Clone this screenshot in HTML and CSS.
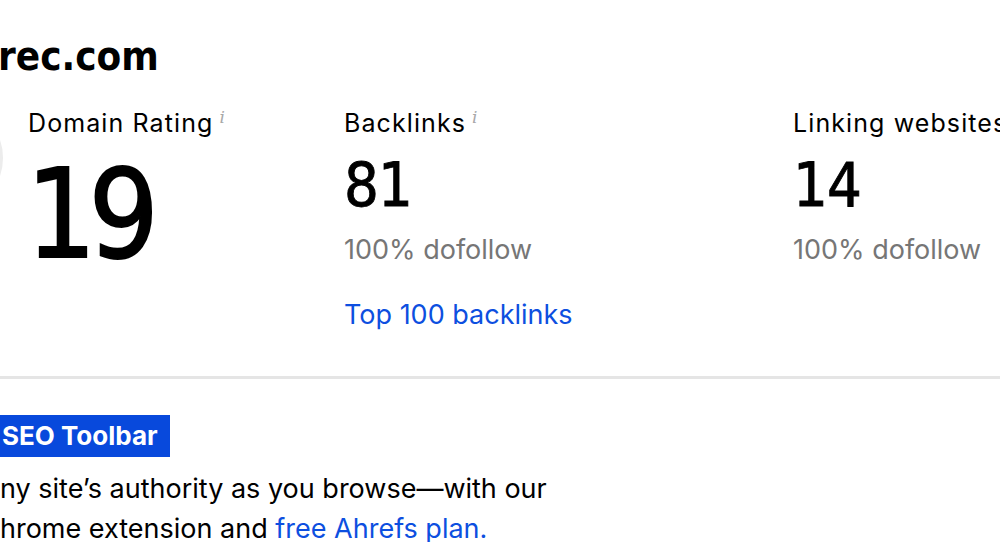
FILE: index.html
```html
<!DOCTYPE html>
<html>
<head>
<meta charset="utf-8">
<link rel="stylesheet" href="styles.css">
</head>
<body>
<main class="page">
  <h1 class="domain">rec.com</h1>
  <section class="stats">
    <div class="gauge"></div>
    <div class="stat stat-dr">
      <div class="label">Domain Rating<span class="info">i</span></div>
      <div class="big">19</div>
    </div>
    <div class="stat stat-bl">
      <div class="label">Backlinks<span class="info">i</span></div>
      <div class="num">81</div>
      <div class="sub">100% dofollow</div>
      <a class="link" href="#">Top 100 backlinks</a>
    </div>
    <div class="stat stat-lw">
      <div class="label">Linking websites</div>
      <div class="num">14</div>
      <div class="sub">100% dofollow</div>
    </div>
  </section>
  <hr class="divider">
  <section class="promo">
    <div class="badge">SEO Toolbar</div>
    <p class="text">ny site’s authority as you browse—with our<br>hrome extension and <a class="link" href="#">free Ahrefs plan.</a></p>
  </section>
</main>
</body>
</html>
```
FILE: styles.css
```css
html, body {
  margin: 0;
  padding: 0;
  background: #fff;
  overflow: hidden;
}
.page {
  width: 1000px;
  height: 542px;
  overflow: hidden;
  font-family: "Inter", "Liberation Sans", sans-serif;
  color: #000;
}
.domain {
  margin: 0;
  padding-top: 32px;
  margin-left: -2px;
  font-family: "DejaVu Sans Condensed", "DejaVu Sans", sans-serif;
  font-stretch: condensed;
  font-weight: 700;
  font-size: 40px;
  line-height: 48px;
  white-space: nowrap;
}
.stats {
  display: flex;
  align-items: flex-start;
  margin-top: 28px;
  white-space: nowrap;
}
.gauge {
  flex: none;
  width: 102px;
  height: 102px;
  border: 3px solid #ececec;
  border-radius: 50%;
  margin-top: -4px;
  margin-left: -105px;
  margin-right: 25px;
}
.stat { flex: none; }
.stat-dr { width: 316px; }
.stat-bl { width: 449px; }
.label {
  font-size: 25px;
  line-height: 30px;
  letter-spacing: 1.1px;
}
.info {
  font-family: "DejaVu Serif", serif;
  font-style: italic;
  font-size: 17px;
  line-height: 0;
  color: #a8a8a8;
  vertical-align: 9px;
  margin-left: 6px;
}
.big {
  font-family: "DejaVu Sans Condensed", "DejaVu Sans", sans-serif;
  font-stretch: condensed;
  font-size: 123px;
  line-height: 123px;
  margin-top: 15px;
  letter-spacing: -8px;
  margin-left: -2px;
  -webkit-text-stroke: 1.8px #000;
}
.num {
  font-family: "DejaVu Sans Condensed", "DejaVu Sans", sans-serif;
  font-stretch: condensed;
  font-size: 61px;
  line-height: 61px;
  margin-top: 16px;
  letter-spacing: -1px;
  -webkit-text-stroke: 0.8px #000;
}
.sub {
  font-size: 27px;
  line-height: 36px;
  color: #767676;
  margin-top: 17px;
}
.link {
  color: #0d4fe0;
  text-decoration: none;
}
.stat-bl .link {
  display: block;
  font-size: 27px;
  line-height: 36px;
  margin-top: 29px;
}
.divider {
  margin: 43px 0 0 0;
  border: 0;
  height: 3px;
  background: #e5e5e5;
}
.promo {
  padding-top: 36px;
}
.badge {
  display: inline-block;
  background: #0849dc;
  color: #fff;
  font-weight: 700;
  font-size: 26px;
  line-height: 42px;
  padding: 0 12px 0 2px;
}
.text {
  margin: 12px 0 0 0;
  font-size: 27px;
  line-height: 40px;
  white-space: nowrap;
}
```
